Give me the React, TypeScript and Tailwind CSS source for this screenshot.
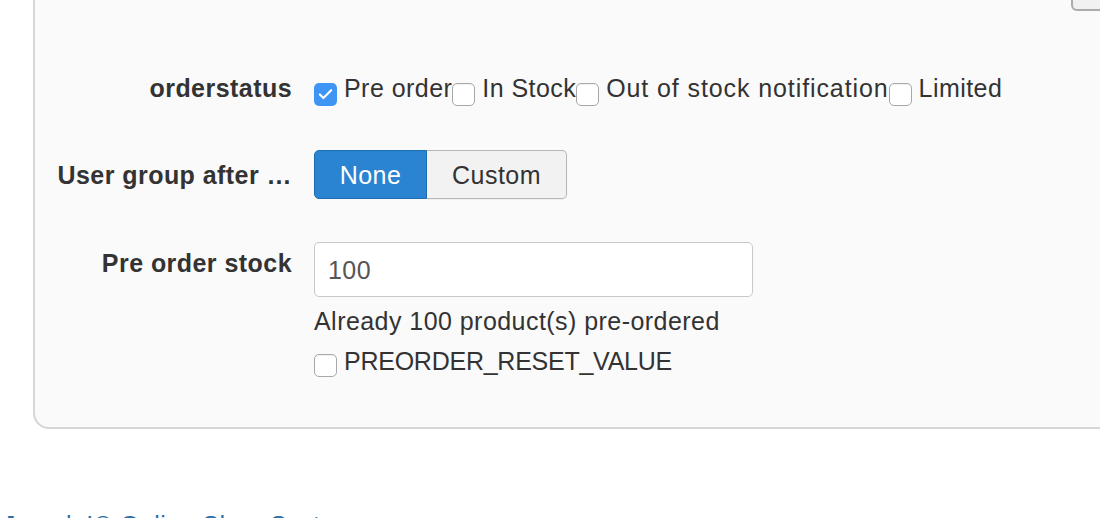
import { Check } from "lucide-react"

function Box({ checked = false }: { checked?: boolean }) {
  if (checked) {
    return (
      <span className="flex h-[23px] w-[23px] shrink-0 items-center justify-center rounded-[5px] bg-[#3f95f4]">
        <Check className="h-[17px] w-[17px] text-white" strokeWidth={3} />
      </span>
    )
  }
  return (
    <span className="block h-[23px] w-[23px] shrink-0 rounded-[5px] border border-[#a8a8a8] bg-white shadow-[inset_0_1px_1px_rgba(0,0,0,0.06)]" />
  )
}

export default function App() {
  const statuses = [
    { label: "Pre order", checked: true, wide: false },
    { label: "In Stock", checked: false, wide: false },
    { label: "Out of stock notification", checked: false, wide: true },
    { label: "Limited", checked: false, wide: false },
  ]

  return (
    <div
      className="h-[518px] w-[1100px] overflow-hidden bg-white text-[25px] leading-[30px] tracking-[0.45px] text-[#333]"
      style={{ fontFamily: '"Liberation Sans", Arial, sans-serif' }}
    >
      <div className="ml-[33px] mt-[-20px] w-[1200px] rounded-[16px] border-2 border-[#d6d6d6] bg-[#fafafa] pb-[50px]">
        <div className="flex justify-end pr-[40px]">
          <div className="h-[29px] w-[120px] rounded-b-[6px] border-2 border-t-0 border-[#acacac] bg-[#f1f1f1]" />
        </div>

        {/* orderstatus */}
        <div className="mt-[62px] grid grid-cols-[257px_1fr] gap-x-[22px]">
          <div className="text-right font-bold">orderstatus</div>
          <div className="flex items-start">
            {statuses.map((s) => (
              <label key={s.label} className="flex items-start">
                <span className="mt-[10px] mr-[7px]">
                  <Box checked={s.checked} />
                </span>
                <span className={s.wide ? "whitespace-nowrap tracking-[0.9px]" : "whitespace-nowrap"}>{s.label}</span>
              </label>
            ))}
          </div>
        </div>

        {/* user group */}
        <div className="mt-[44px] grid grid-cols-[257px_1fr] items-center gap-x-[22px]">
          <div className="whitespace-nowrap text-right font-bold">User group after …</div>
          <div className="flex">
            <button className="h-[49px] w-[113px] rounded-l-[5px] border border-[#1f6cae] bg-[#2a84d2] text-white">
              None
            </button>
            <button className="h-[49px] w-[140px] rounded-r-[5px] border border-l-0 border-[#b6b6b6] bg-[#f2f2f2] text-[#333] shadow-[0_1px_1px_rgba(0,0,0,0.05)]">
              Custom
            </button>
          </div>
        </div>

        {/* pre order stock */}
        <div className="mt-[43px] grid grid-cols-[257px_1fr] gap-x-[22px]">
          <div className="mt-[6px] text-right font-bold">Pre order stock</div>
          <div>
            <div className="flex h-[55px] w-[439px] items-center rounded-[5px] border border-[#c8c8c8] bg-white pl-[13px] pt-[1px] text-[#555]">
              100
            </div>
            <div className="mt-[9px]">Already 100 product(s) pre-ordered</div>
            <label className="mt-[10px] flex items-start">
              <span className="mt-[8px] mr-[7px]">
                <Box />
              </span>
              <span className="tracking-[-0.25px]">PREORDER_RESET_VALUE</span>
            </label>
          </div>
        </div>
      </div>

      <div className="ml-[3px] mt-[81px] whitespace-nowrap text-[#2f6da6]">
        Joomla!® Online Shop System
      </div>
    </div>
  )
}
